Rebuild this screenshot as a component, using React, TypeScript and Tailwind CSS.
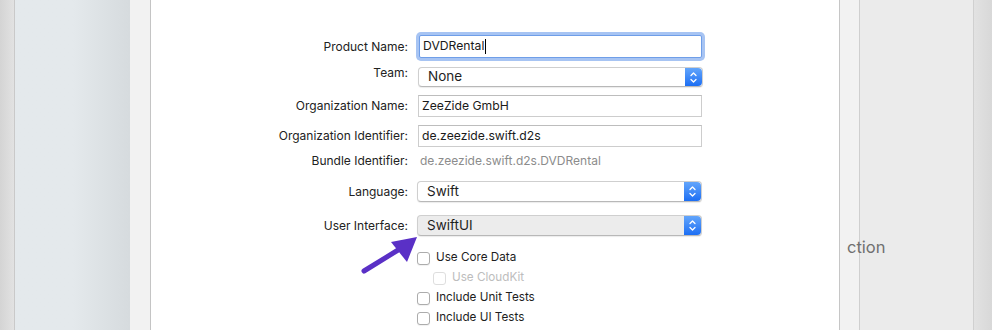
import React from "react";

const font = { fontFamily: "Inter, 'Liberation Sans', Arial, sans-serif" };

function Stepper() {
  return (
    <div className="flex h-full w-[17px] flex-col items-center justify-center rounded-r-[4px] bg-gradient-to-b from-[#62a5fb] to-[#1b6ef3]">
      <svg width="9" height="13" viewBox="0 0 9 13" fill="none">
        <path d="M2 4.5 L4.5 2 L7 4.5" stroke="white" strokeWidth="1.3" strokeLinecap="round" strokeLinejoin="round" />
        <path d="M2 8.5 L4.5 11 L7 8.5" stroke="white" strokeWidth="1.3" strokeLinecap="round" strokeLinejoin="round" />
      </svg>
    </div>
  );
}

function Popup({ value, h, gray }: { value: string; h: string; gray?: boolean }) {
  return (
    <div
      className={`flex w-[285px] items-center rounded-[4px] border border-[#cfcfcf] border-b-[#b8b8b8] shadow-[0_1px_1px_rgba(0,0,0,0.08)] ${h} ${gray ? "bg-[#ececec]" : "bg-white"}`}
    >
      <span className="flex-1 pl-[9px] text-[13.5px] leading-none text-[#1e1e1e]">{value}</span>
      <Stepper />
    </div>
  );
}

function Field({ value }: { value: string }) {
  return (
    <div className="flex h-[22px] w-[284px] items-center border border-[#cdcdcd] border-t-[#bdbdbd] bg-white pl-[3px] text-[12.2px] text-[#1a1a1a]">
      {value}
    </div>
  );
}

function Label({ children, className = "" }: { children: React.ReactNode; className?: string }) {
  return (
    <div className={`w-[257px] shrink-0 text-right text-[12px] text-[#222222] ${className}`}>{children}</div>
  );
}

function Check({ label, disabled }: { label: string; disabled?: boolean }) {
  return (
    <div className={`flex h-[20px] items-center ${disabled ? "pl-[16px]" : ""}`}>
      <div
        className={`h-[13px] w-[13px] rounded-[3px] border bg-white ${disabled ? "border-[#dedede]" : "border-[#acacac] shadow-[0_1px_1px_rgba(0,0,0,0.06)]"}`}
      />
      <span className={`ml-[6px] text-[11.7px] ${disabled ? "text-[#bdbdbd]" : "text-[#1e1e1e]"}`}>{label}</span>
    </div>
  );
}

export default function App() {
  return (
    <div className="flex h-[330px] w-[992px] overflow-hidden bg-white" style={font}>
      <div className="h-full w-[15px] shrink-0 border-r border-[#c9c9c9] bg-gradient-to-r from-[#d4d4d4] to-[#e2e2e2]" />
      <div className="h-full w-[115px] shrink-0 bg-gradient-to-r from-[#e4e9ec] via-[#e4e9ec] to-[#d6dbde]" />
      <div className="h-full w-[21px] shrink-0 border-r border-[#c4c4c4] bg-[#f2f2f2]" />
      <div className="relative h-full w-[688px] shrink-0 bg-white">
        <div className="flex flex-col pt-[35px]">
          <div className="flex h-[23px] items-center">
            <Label>Product Name:</Label>
            <div className="ml-[11px] flex h-[23px] w-[283px] items-center rounded-[2px] border border-[#6f9ee8] bg-white pl-[3px] text-[12.2px] text-[#1a1a1a] shadow-[0_0_0_3px_#a7c4f3]">
              DVDRental
              <span className="ml-[1px] inline-block h-[15px] w-[1px] bg-black" />
            </div>
          </div>
          <div className="mt-[9px] flex h-[20px] items-start">
            <Label className="leading-[12px]">Team:</Label>
            <div className="ml-[10px]">
              <Popup value="None" h="h-[20px]" />
            </div>
          </div>
          <div className="mt-[8px] flex h-[22px] items-center">
            <Label>Organization Name:</Label>
            <div className="ml-[10px]">
              <Field value="ZeeZide GmbH" />
            </div>
          </div>
          <div className="mt-[8px] flex h-[22px] items-center">
            <Label>Organization Identifier:</Label>
            <div className="ml-[10px]">
              <Field value="de.zeezide.swift.d2s" />
            </div>
          </div>
          <div className="mt-[5px] flex h-[18px] items-center">
            <Label>Bundle Identifier:</Label>
            <div className="ml-[12px] text-[12px] text-[#8c8c8c]">de.zeezide.swift.d2s.DVDRental</div>
          </div>
          <div className="mt-[11px] flex h-[21px] items-center">
            <Label>Language:</Label>
            <div className="ml-[9px]">
              <Popup value="Swift" h="h-[21px]" />
            </div>
          </div>
          <div className="mt-[13px] flex h-[21px] items-center">
            <Label>User Interface:</Label>
            <div className="ml-[9px]">
              <Popup value="SwiftUI" h="h-[21px]" gray />
            </div>
          </div>
          <div className="mt-[12px] flex flex-col pl-[266px]">
            <Check label="Use Core Data" />
            <Check label="Use CloudKit" disabled />
            <Check label="Include Unit Tests" />
            <Check label="Include UI Tests" />
          </div>
        </div>
        <svg className="absolute left-[208px] top-[234px]" width="62" height="42" viewBox="0 0 62 42">
          <line x1="5" y1="37" x2="44" y2="13" stroke="#5a30c6" strokeWidth="5" strokeLinecap="round" />
          <polygon points="58,3 32,8 48,28" fill="#5a30c6" />
        </svg>
      </div>
      <div className="relative flex h-full flex-1">
        <div className="h-full w-[21px] shrink-0 border-x border-l-[#c6c6c6] border-r-[#cfcfcf] bg-[#f2f2f2]" />
        <div className="h-full w-[114px] shrink-0 border-r border-[#d0d0d0] bg-[#ebebeb]" />
        <div className="h-full flex-1 bg-gradient-to-r from-[#e2e2e2] to-[#d8d8d8]" />
        <span className="absolute left-[8px] top-[235px] text-[16.5px] text-[#707070]">ction</span>
      </div>
    </div>
  );
}
